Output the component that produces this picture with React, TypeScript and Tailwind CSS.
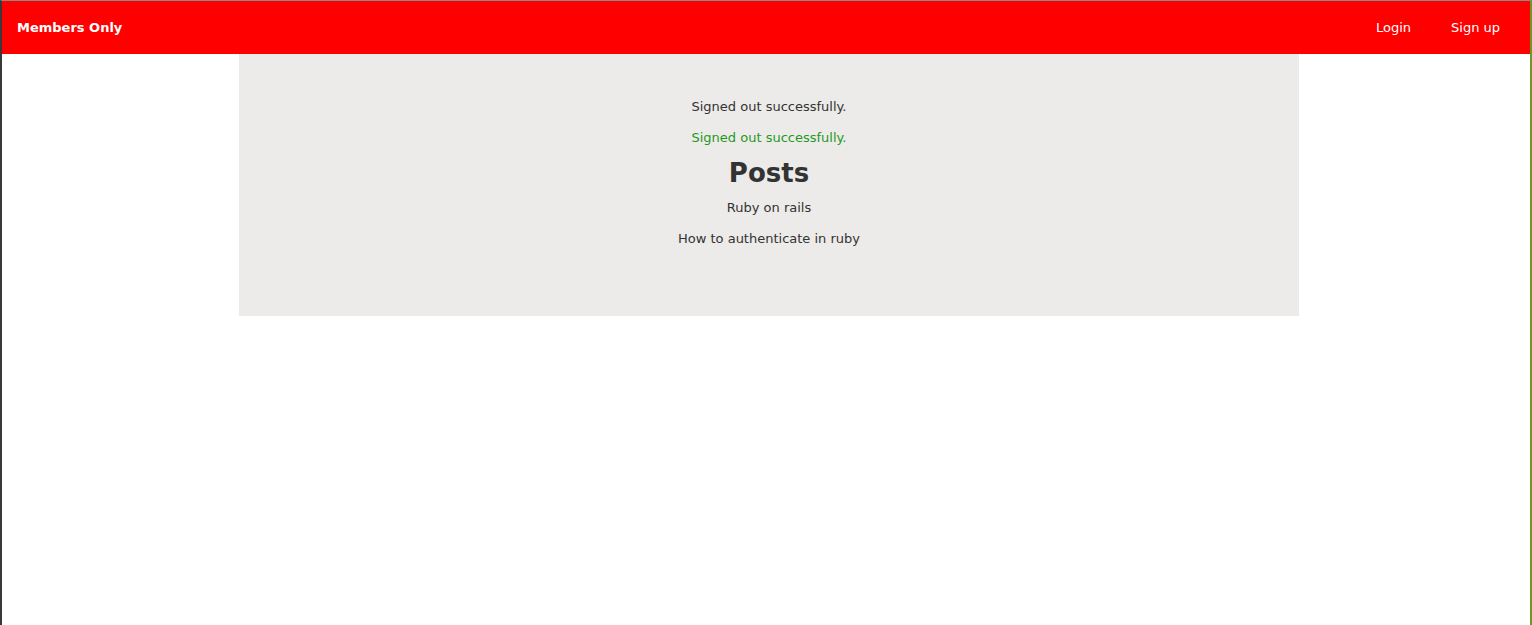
import React from "react";

export default function App() {
  return (
    <div
      className="h-[625px] w-[1532px] overflow-hidden bg-white border-l-2 border-l-[#3a3838] border-r-2 border-r-[#6a9a22] border-t border-t-[#8a8a8a] flex flex-col"
      style={{ fontFamily: '"DejaVu Sans", Verdana, sans-serif' }}
    >
      <nav className="h-[53px] bg-[#ff0000] flex items-center justify-between pl-[15px] pr-[30px] text-white text-[13px] shrink-0">
        <span className="font-bold">Members Only</span>
        <div className="flex gap-[40px]">
          <span>Login</span>
          <span>Sign up</span>
        </div>
      </nav>
      <div className="ml-[237px] w-[1060px] h-[262px] bg-[#ecebe9] flex flex-col items-center text-[13px] text-[#333333] pt-[45px]">
        <p className="leading-[15px]">Signed out successfully.</p>
        <p className="leading-[15px] mt-[16px] text-[#1e9a1e]">Signed out successfully.</p>
        <h1 className="leading-[28px] mt-[14px] text-[26px] font-bold">Posts</h1>
        <p className="leading-[15px] mt-[13px]">Ruby on rails</p>
        <p className="leading-[15px] mt-[16px]">How to authenticate in ruby</p>
      </div>
    </div>
  );
}
